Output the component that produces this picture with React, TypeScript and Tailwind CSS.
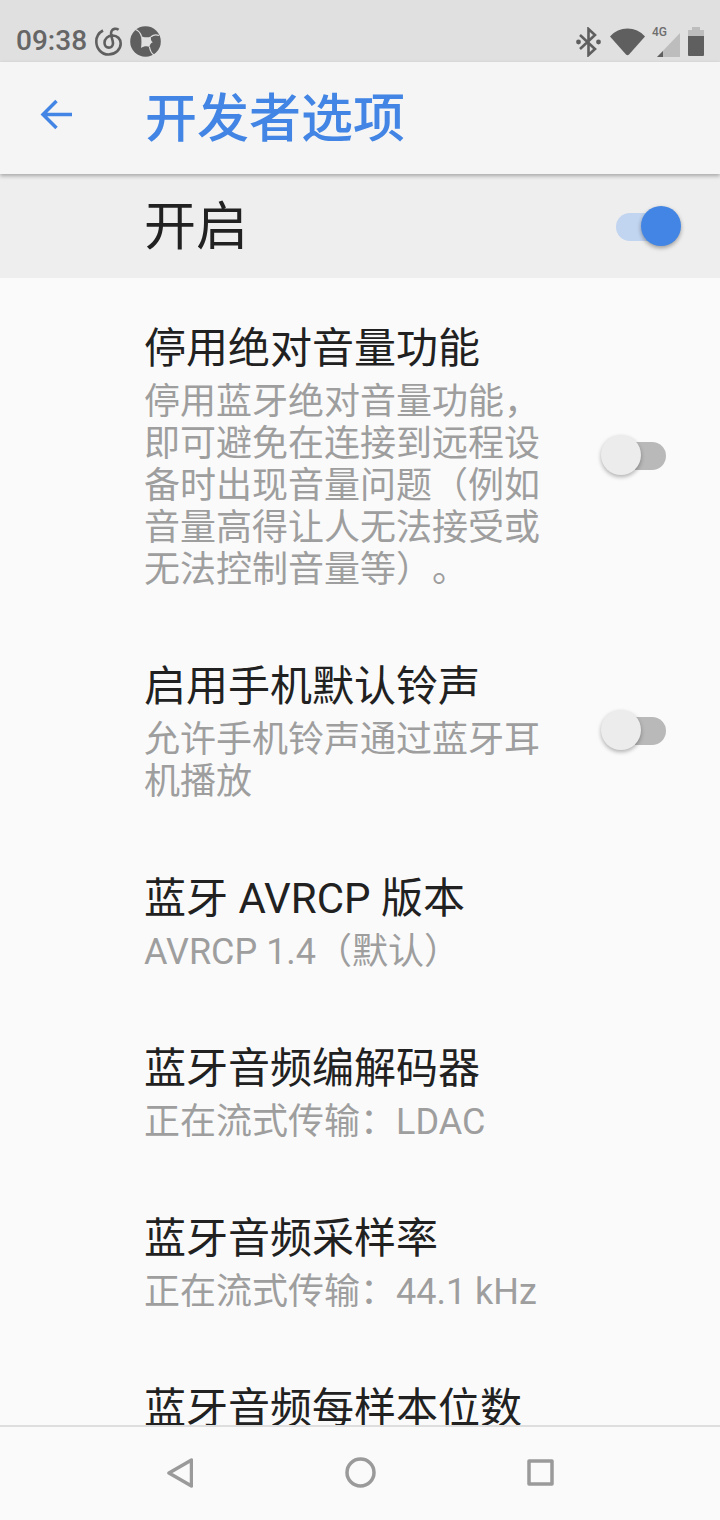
import React from 'react';

const FONT = "font-['Roboto','Noto_Sans_CJK_SC',sans-serif] [text-spacing-trim:space-all]";

const Toggle = () => (
  <div className="relative mt-[1px] w-[65px] h-[42px] flex items-center justify-end shrink-0">
    <div className="w-[52px] h-[28px] rounded-full bg-[#b9b9b9]" />
    <div className="absolute left-0 top-0 w-[40px] h-[40px] rounded-full bg-[#ececec] shadow-[0_2px_4px_rgba(0,0,0,0.3)]" />
  </div>
);

const Row = ({ title, summary, toggle }: { title: string; summary: string[]; toggle?: boolean }) => (
  <div className="flex items-center pl-[144px] pr-[54px] py-[33px]">
    <div className="flex-1">
      <div className="text-[42px] leading-[60px] text-[#212121] whitespace-nowrap">{title}</div>
      <div className="mt-[2px] text-[36px] leading-[42px] text-[#9e9e9e]">
        {summary.map(line => (
          <div key={line} className="whitespace-nowrap">{line}</div>
        ))}
      </div>
    </div>
    {toggle && <Toggle />}
  </div>
);

const App: React.FC = () => {
  return (
    <div className={`w-[720px] h-[1520px] flex flex-col overflow-hidden bg-[#fafafa] ${FONT}`}>
      {/* status bar */}
      <div className="h-[62px] bg-[#e0e0e0] flex items-center justify-between pl-[16px] pr-[16px] pt-[20px] shrink-0 text-[#5f5f5f]">
        <div className="flex items-center">
          <span className="text-[28px] leading-[40px] font-medium text-[#666666] font-['Roboto',sans-serif]">09:38</span>
          <svg className="ml-[8px]" width="27" height="29" viewBox="0 0 27 29" fill="none" stroke="#5f5f5f" strokeWidth="2.6">
            <path d="M8 3.5C3.8 5.8 1.3 9.8 1.3 14.5C1.3 21.8 6.6 27.5 13.5 27.5C20.5 27.5 25.7 22.6 25.7 16.6C25.7 11.8 22.2 8.5 17.6 8.5C13 8.5 9.5 11.8 9.5 15.8C9.5 18.8 11.4 20.6 13.8 20.6C16.5 20.6 18 18.6 18 16.2C18 12 14.6 8 16.6 4C17.6 1.9 20.8 0.8 23.6 2.8" />
          </svg>
          <svg className="ml-[8px]" width="31" height="31" viewBox="0 0 31 31">
            <circle cx="15.5" cy="15.5" r="15.3" fill="#5f5f5f" />
            <path d="M11 10C13.5 11.6 18.5 11.6 21 10.4C20.6 12.6 21 15.4 22.8 16.2C20.6 17 19.6 19 19.6 21C17 19.6 13.5 20.2 11 22C11.6 18 11.6 14 11 10Z" fill="#e0e0e0" />
            <path d="M11.5 10.5C10.5 7 8.5 4.5 5.5 3.5M21 10.8C23 9 26 8.5 29 9.5M19.5 21C20 24 21 27 24 29" fill="none" stroke="#e0e0e0" strokeWidth="1.2" />
          </svg>
        </div>
        <div className="flex items-center mt-[1px]">
          <svg width="25" height="30" viewBox="0 0 25 30" fill="none" stroke="#5f5f5f" strokeWidth="2.6">
            <path d="M4 8L19 22L12.5 28V2L19 8L4 22" />
            <circle cx="2.5" cy="15" r="2.4" fill="#5f5f5f" stroke="none" />
            <circle cx="22.5" cy="15" r="2.4" fill="#5f5f5f" stroke="none" />
          </svg>
          <svg className="ml-[9px]" width="35" height="28" viewBox="0 0 35 28">
            <path d="M0 8.5C4.5 3.2 10.8 0.5 17.5 0.5C24.2 0.5 30.5 3.2 35 8.5L19 26.5C18.1 27.5 16.9 27.5 16 26.5Z" fill="#5f5f5f" />
          </svg>
          <div className="relative ml-[11px] w-[24px] h-[28px] mt-[-2px]">
            <svg className="absolute right-0 bottom-[-2px]" width="23" height="24" viewBox="0 0 23 24">
              <path d="M23 0V24H0Z" fill="#bdbdbd" />
              <path d="M6 18V24H0Z" fill="#5f5f5f" />
            </svg>
            <span className="absolute left-[-4px] top-[-2px] text-[12px] leading-[14px] font-medium text-[#6e6e6e] font-['Roboto',sans-serif]">4G</span>
          </div>
          <div className="ml-[8px] w-[16px] h-[29px] relative">
            <div className="absolute left-[4px] top-0 w-[8px] h-[3px] bg-[#bdbdbd]" />
            <div className="absolute left-0 top-[3px] w-[16px] h-[6px] bg-[#bdbdbd]" />
            <div className="absolute left-0 top-[9px] w-[16px] h-[20px] bg-[#5f5f5f] rounded-b-[1px]" />
          </div>
        </div>
      </div>

      {/* app bar */}
      <div className="relative z-10 h-[112px] bg-[#f5f5f5] flex items-center shrink-0 pt-[4px] shadow-[0_2px_4px_rgba(0,0,0,0.3)]">
        <svg className="ml-[40px] mt-[-10px]" width="32" height="32" viewBox="0 0 32 32" fill="none" stroke="#4285e4" strokeWidth="3.5">
          <path d="M32 15.5H3M16.5 2L3 15.5L16.5 29" />
        </svg>
        <h1 className="ml-[73px] text-[52px] leading-[60px] font-medium text-[#4285e4]">开发者选项</h1>
      </div>

      {/* master switch */}
      <div className="h-[104px] bg-[#eeeeee] flex items-center justify-between pl-[144px] pr-[39px] shrink-0">
        <span className="text-[52px] leading-[60px] mt-[3px] text-[#212121]">开启</span>
        <div className="relative w-[65px] h-[42px] mt-[2px] flex items-center">
          <div className="w-[52px] h-[28px] rounded-full bg-[#c1d4f0]" />
          <div className="absolute right-0 top-0 w-[40px] h-[40px] rounded-full bg-[#4285e4] shadow-[0_2px_4px_rgba(0,0,0,0.35)]" />
        </div>
      </div>

      {/* settings list */}
      <div className="flex-1 min-h-0 overflow-hidden pt-[8px]">
        <Row title="停用绝对音量功能" toggle summary={['停用蓝牙绝对音量功能，', '即可避免在连接到远程设', '备时出现音量问题（例如', '音量高得让人无法接受或', '无法控制音量等）。']} />
        <Row title="启用手机默认铃声" toggle summary={['允许手机铃声通过蓝牙耳', '机播放']} />
        <Row title="蓝牙 AVRCP 版本" summary={['AVRCP 1.4（默认）']} />
        <Row title="蓝牙音频编解码器" summary={['正在流式传输：LDAC']} />
        <Row title="蓝牙音频采样率" summary={['正在流式传输：44.1 kHz']} />
        <Row title="蓝牙音频每样本位数" summary={['正在流式传输：16 位']} />
      </div>

      {/* nav bar */}
      <div className="h-[95px] shrink-0 bg-[#fafafa] border-t-2 border-[#dedede] flex items-center justify-between pl-[167px] pr-[166px] pb-[2px]">
        <svg width="26" height="30" viewBox="0 0 26 30" fill="none" stroke="#9a9a9a" strokeWidth="3.5" strokeLinejoin="round">
          <path d="M24.5 2V28L2 15Z" />
        </svg>
        <svg width="31" height="31" viewBox="0 0 31 31" fill="none" stroke="#9a9a9a" strokeWidth="3.5">
          <circle cx="15.5" cy="15.5" r="13.5" />
        </svg>
        <svg width="27" height="27" viewBox="0 0 27 27" fill="none" stroke="#9a9a9a" strokeWidth="3.5" strokeLinejoin="round">
          <rect x="2" y="2" width="23" height="23" />
        </svg>
      </div>
    </div>
  );
};

export default App;
